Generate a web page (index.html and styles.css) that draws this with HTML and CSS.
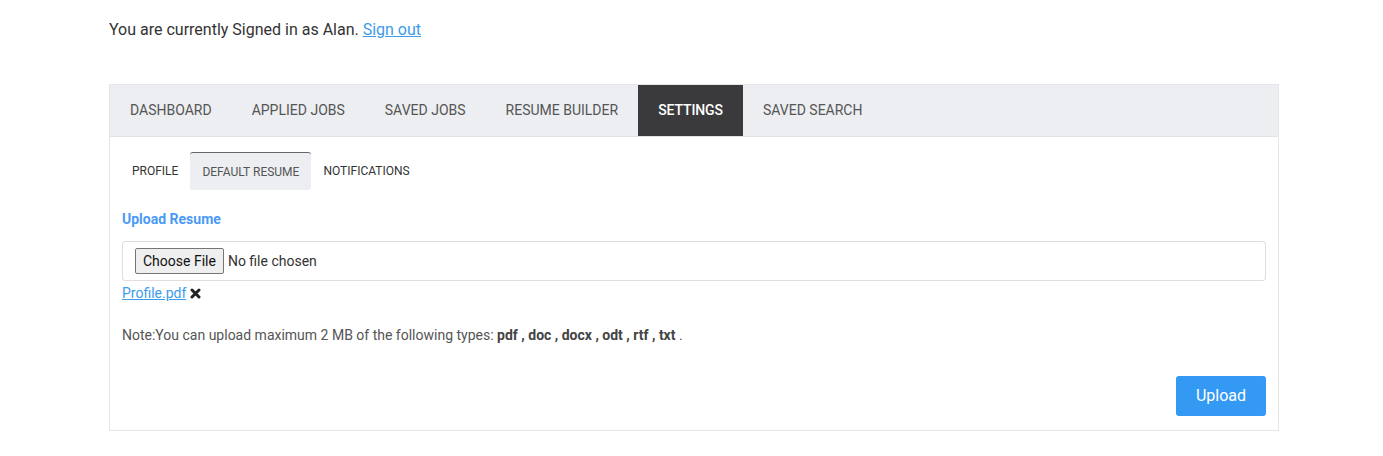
FILE: index.html
```html
<!DOCTYPE html>
<html>
<head>
<meta charset="utf-8">
<link rel="stylesheet" href="styles.css">
</head>
<body>
<div class="page">
  <p class="signed">You are currently Signed in as Alan. <a href="#" class="link">Sign out</a></p>
  <div class="panel">
    <nav class="tabs">
      <a class="tab">DASHBOARD</a>
      <a class="tab">APPLIED JOBS</a>
      <a class="tab">SAVED JOBS</a>
      <a class="tab">RESUME BUILDER</a>
      <a class="tab active">SETTINGS</a>
      <a class="tab">SAVED SEARCH</a>
    </nav>
    <div class="body">
      <nav class="subtabs">
        <a class="subtab">PROFILE</a>
        <a class="subtab active">DEFAULT RESUME</a>
        <a class="subtab">NOTIFICATIONS</a>
      </nav>
      <h4 class="label">Upload Resume</h4>
      <div class="filebox">
        <span class="choose">Choose File</span>
        <span class="nofile">No file chosen</span>
      </div>
      <div class="current">
        <a href="#" class="link">Profile.pdf</a>
        <svg class="x" viewBox="0 0 11 11" width="11" height="11"><path d="M2 2 L9 9 M9 2 L2 9" stroke="#222" stroke-width="3" stroke-linecap="round"/></svg>
      </div>
      <p class="note">Note:You can upload maximum 2 MB of the following types: <b>pdf , doc , docx , odt , rtf , txt</b> .</p>
      <div class="actions">
        <button class="upload">Upload</button>
      </div>
    </div>
  </div>
</div>
</body>
</html>
```
FILE: styles.css
```css
html, body {
  margin: 0;
  padding: 0;
  background: #fff;
}
body {
  font-family: Roboto, "Liberation Sans", sans-serif;
  color: #333;
}
.page {
  width: 1170px;
  margin-left: 109px;
  padding-top: 19px;
}
.signed {
  margin: 0;
  font-size: 16px;
  line-height: 22px;
  color: #333;
}
.link {
  color: #3d9be9;
  text-decoration: underline;
}
.panel {
  margin-top: 43px;
  border: 1px solid #e6e6e6;
  height: 345px;
}
.tabs {
  display: flex;
  background: #eceef1;
  height: 51px;
  border-bottom: 1px solid #e2e3e6;
}
.tab {
  display: flex;
  align-items: center;
  padding: 0 20px 2px 20px;
  font-size: 14px;
  color: #555;
}
.tab.active {
  background: #3a3a3c;
  color: #fff;
  font-weight: 500;
  letter-spacing: -0.1px;
}
.body {
  padding: 15px 12px 0 12px;
}
.subtabs {
  display: flex;
  height: 38px;
}
.subtab {
  display: flex;
  align-items: center;
  padding: 0 10px;
  font-size: 12px;
  color: #333;
}
.subtab.active {
  background: #eceef1;
  border-top: 1px solid #666;
  border-radius: 3px;
  color: #555;
  padding: 1px 12px 0 12px;
  margin-left: 2px;
  margin-right: 2px;
}
.label {
  margin: 20px 0 0 0;
  font-size: 14px;
  line-height: 18px;
  font-weight: bold;
  color: #4a9af5;
}
.filebox {
  margin-top: 13px;
  height: 38px;
  border: 1px solid #dedede;
  border-radius: 3px;
  display: flex;
  align-items: center;
  padding-left: 12px;
  font-size: 14px;
}
.choose {
  font-family: Roboto, "Liberation Sans", sans-serif;
  font-size: 14px;
  color: #111;
  background: #efefef;
  border: 1px solid #767676;
  border-radius: 2px;
  padding: 4px 7px;
  line-height: 16px;
}
.nofile {
  margin-left: 4px;
  color: #333;
}
.current {
  margin-top: 3px;
  display: flex;
  align-items: center;
  gap: 4px;
  font-size: 14px;
  line-height: 18px;
}
.x {
  margin-top: 1px;
}
.note {
  margin: 24px 0 0 0;
  font-size: 14px;
  line-height: 18px;
  color: #555;
}
.note b {
  color: #444;
}
.actions {
  display: flex;
  justify-content: flex-end;
  margin-top: 32px;
}
.upload {
  width: 90px;
  height: 40px;
  background: #3399f3;
  border: none;
  border-radius: 3px;
  color: #fff;
  font-family: Roboto, "Liberation Sans", sans-serif;
  font-size: 16px;
  padding-bottom: 2px;
}
```
